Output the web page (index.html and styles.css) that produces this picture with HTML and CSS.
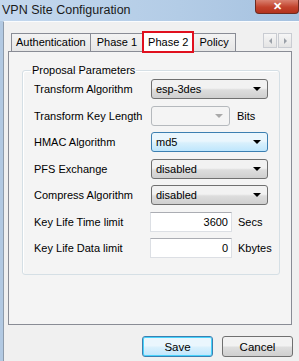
FILE: index.html
```html
<!DOCTYPE html>
<html lang="en">
<head>
    <meta charset="UTF-8">
    <title>VPN Site Configuration</title>
    <link rel="stylesheet" href="styles.css">
</head>
<body>
    <div class="titlebar">
        <span class="title">VPN Site Configuration</span>
        <span class="close">&#x2715;</span>
    </div>
    <div class="frame">
        <div class="client">
            <div class="tabstrip">
                <div class="tab first">Authentication</div>
                <div class="tab">Phase 1</div>
                <div class="tab active">Phase 2</div>
                <div class="tab">Policy</div>
                <div class="scroller">
                    <span class="arrow"><i class="tri left"></i></span>
                    <span class="arrow"><i class="tri right"></i></span>
                </div>
            </div>
            <div class="panel">
                <fieldset class="group">
                    <legend>Proposal Parameters</legend>

                    <div class="row">
                        <label>Transform Algorithm</label>
                        <div class="select">esp-3des<i class="caret"></i></div>
                    </div>
                    <div class="row">
                        <label>Transform Key Length</label>
                        <div class="select small disabled"><i class="caret"></i></div>
                        <span class="unit">Bits</span>
                    </div>
                    <div class="row">
                        <label>HMAC Algorithm</label>
                        <div class="select hover">md5<i class="caret"></i></div>
                    </div>
                    <div class="row">
                        <label>PFS Exchange</label>
                        <div class="select">disabled<i class="caret"></i></div>
                    </div>
                    <div class="row">
                        <label>Compress Algorithm</label>
                        <div class="select">disabled<i class="caret"></i></div>
                    </div>
                    <div class="row">
                        <label>Key Life Time limit</label>
                        <div class="input">3600</div>
                        <span class="unit">Secs</span>
                    </div>
                    <div class="row">
                        <label>Key Life Data limit</label>
                        <div class="input">0</div>
                        <span class="unit">Kbytes</span>
                    </div>
                </fieldset>
            </div>
            <div class="buttons">
                <button class="btn default">Save</button>
                <button class="btn">Cancel</button>
            </div>
        </div>
    </div>
</body>
</html>
```

FILE: styles.css
```css
body {
    margin: 0;
    width: 299px;
    height: 361px;
    overflow: hidden;
    font-family: "Liberation Sans", Arial, sans-serif;
    font-size: 11px;
    color: #000;
    background-color: #f0f0f0;
}
.titlebar {
    height: 21px;
    display: flex;
    justify-content: space-between;
    align-items: flex-start;
    background: linear-gradient(to right, #c4d8ee, #b3cce6 60%, #a6c2e0);
}
.title {
    padding: 3px 0 0 2px;
    font-size: 12.5px;
    color: #1a1a1a;
}
.close {
    width: 44px;
    height: 14px;
    line-height: 12px;
    text-align: center;
    color: #fff;
    font-size: 11px;
    font-weight: bold;
    background: linear-gradient(to bottom, #d9806f, #c2422c 55%, #b3321d);
    border: 1px solid #6d2a20;
    border-top: none;
    border-radius: 0 0 4px 4px;
    box-sizing: border-box;
}
.frame {
    height: 340px;
    border-left: 3px solid #b2c9e2;
    background-color: #f0f0f0;
}
.client {
    height: 100%;
    border-left: 1px solid #8d9bab;
    border-top: 1px solid #fafcfe;
    padding: 9px 7px 0 4px;
    box-sizing: border-box;
}
.tabstrip {
    display: flex;
    align-items: flex-end;
    height: 20px;
    padding-left: 3px;
}
.tab {
    height: 17px;
    line-height: 17px;
    padding: 0 6px;
    border: 1px solid #898c95;
    border-bottom: none;
    margin-right: -1px;
    background: linear-gradient(to bottom, #f3f3f3, #e6e6e6);
}
.tab.first {
    padding: 0 4px;
}
.tab.active {
    height: 19px;
    line-height: 18px;
    padding: 0 4px;
    margin-bottom: -1px;
    background: #fff;
    position: relative;
    z-index: 1;
    outline: 2px solid #e0101e;
    outline-offset: -1px;
}
.scroller {
    margin-left: auto;
    align-self: flex-start;
    margin-top: 2px;
    display: flex;
    gap: 1px;
}
.arrow {
    width: 14px;
    height: 15px;
    border: 1px solid #c9ccd2;
    background: linear-gradient(to bottom, #f6f6f6, #e4e4e4);
    box-sizing: border-box;
    display: flex;
    align-items: center;
    justify-content: center;
}
.tri {
    width: 0;
    height: 0;
    border-top: 3px solid transparent;
    border-bottom: 3px solid transparent;
}
.tri.left {
    border-right: 3px solid #9aa0a8;
}
.tri.right {
    border-left: 3px solid #9aa0a8;
}
.panel {
    height: 274px;
    border: 1px solid #898c95;
    background-color: #f4f4f4;
    box-sizing: border-box;
    padding: 12px 11px 0 13px;
}
.group {
    margin: 0;
    height: 211px;
    padding: 3px 0 0 11px;
    border: 1px solid #d5dfe5;
    border-radius: 3px;
    box-shadow: inset 1px 1px 0 #fff;
    box-sizing: border-box;
    display: flex;
    flex-direction: column;
    gap: 6.5px;
}
.group legend {
    padding: 0 1px;
    margin-left: -3px;
}
.row {
    display: flex;
    align-items: center;
    height: 20px;
}
.row label {
    width: 117px;
}
.select {
    width: 117px;
    height: 20px;
    box-sizing: border-box;
    border: 1px solid #707070;
    border-radius: 3px;
    background: linear-gradient(to bottom, #f2f2f2 45%, #dddddd 55%, #cfcfcf);
    padding-left: 4px;
    line-height: 18px;
    display: flex;
    align-items: center;
    justify-content: space-between;
}
.select.hover {
    border-color: #3c7fb1;
    background: linear-gradient(to bottom, #eaf6fd 45%, #d9f0fc 55%, #bee6fd);
}
.select.small {
    width: 79px;
}
.select.disabled {
    border-color: #b5b9bd;
    background: #f4f4f4;
    justify-content: flex-end;
}
.caret {
    width: 0;
    height: 0;
    margin-right: 6px;
    border-left: 4px solid transparent;
    border-right: 4px solid transparent;
    border-top: 4px solid #000;
}
.disabled .caret {
    border-top-color: #a9a9a9;
}
.input {
    width: 82px;
    height: 20px;
    margin-left: -1px;
    box-sizing: border-box;
    border: 1px solid #dcdfe4;
    border-top-color: #abadb3;
    background-color: #fff;
    text-align: right;
    padding-right: 3px;
    line-height: 18px;
}
.unit {
    margin-left: 7px;
}
.input + .unit {
    margin-left: 6px;
}
.buttons {
    display: flex;
    justify-content: flex-end;
    gap: 9px;
    margin-top: 11px;
    margin-right: -1px;
}
.btn {
    width: 71px;
    height: 21px;
    padding: 0;
    font-family: inherit;
    font-size: 11.5px;
    color: #000;
    border: 1px solid #707070;
    border-radius: 3px;
    background: linear-gradient(to bottom, #f2f2f2 45%, #dddddd 55%, #cfcfcf);
}
.btn.default {
    border-color: #3c7fb1;
    box-shadow: inset 0 0 0 1px #48d3fb;
    background: linear-gradient(to bottom, #eaf6fd 45%, #d9f0fc 55%, #bee6fd);
}
```
